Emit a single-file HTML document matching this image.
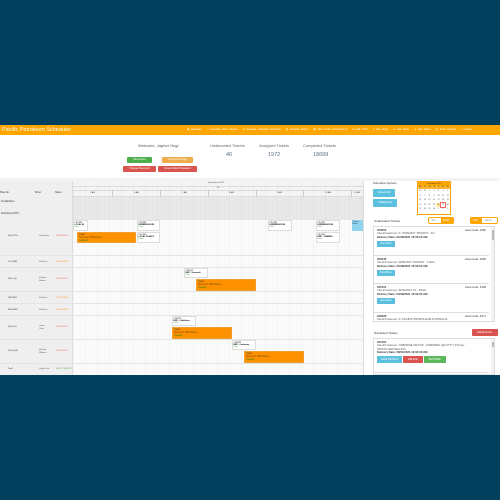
<!DOCTYPE html>
<html><head><meta charset="utf-8"><style>
*{margin:0;padding:0;box-sizing:border-box}
body{width:500px;height:500px;background:#02405e;font-family:"Liberation Sans",sans-serif;position:relative;overflow:hidden}
.a{position:absolute}
.t{position:absolute;white-space:nowrap;line-height:1}
.btn{position:absolute;color:#fff;font-size:2.5px;text-align:center;border-radius:1px}
.card{position:absolute;background:#fff;border:0.5px solid #ddd;font-size:2px;padding:0.5px;line-height:1.2}
.card b{display:block;font-size:2px}
.card i{display:block;background:#fff;color:#4a4;font-style:normal;font-size:2px}
.or{position:absolute;background:#ff9100;border:0.5px solid #f0a030;font-size:2.5px;padding:1px;line-height:1.1;color:#333}
.or span{display:block;color:#6a4a00}
.or em{display:block;color:#2a7a00;font-style:normal}
.tk{position:absolute;left:0;right:5px;border-bottom:0.5px solid #ddd;font-size:2.8px;padding:2px 3px;line-height:1.25;color:#555}
.tk b{color:#333}
.vb{display:inline-block;background:#5bc0de;color:#fff;font-size:2.5px;padding:1.5px 3px;margin-top:1.5px}
</style></head><body>
<div class="a" style="left:0;top:125px;width:500px;height:10px;background:#ffa600"></div>
<div class="t" style="left:2px;top:128px;font-size:5.5px;color:#fff">Pacific Petroleum Scheduler</div>
<div class="t" style="left:187px;top:128.5px;font-size:2.4px;color:#fff;word-spacing:1px">▣ Messages &nbsp; ↗ Generate Driver Routes &nbsp; ⊕ Generate Cancelled Deliveries &nbsp; ▤ Generate Report &nbsp; ▦ View Truck Compartments &nbsp; ⊕ Add Truck &nbsp; ⚲ Add Depot &nbsp; ⊕ Add Driver &nbsp; ▲ Add Admin &nbsp; ▤ Truck Analysis &nbsp; ⇥ Logout</div>
<div class="a" style="left:0;top:135px;width:500px;height:43px;background:#fff"></div>
<div class="a" style="left:0;top:178px;width:500px;height:3px;background:#f3f3f3"></div>
<div class="t" style="left:138px;top:143.5px;font-size:4px;color:#555">Welcome, Japhet Ongl</div>
<div class="t" style="left:210px;top:143.5px;font-size:4px;color:#666">Unallocated Tickets</div>
<div class="t" style="left:259px;top:143.5px;font-size:4px;color:#666">Assigned Tickets</div>
<div class="t" style="left:303px;top:143.5px;font-size:4px;color:#666">Completed Tickets</div>
<div class="t" style="left:226px;top:153px;font-size:5.5px;color:#5a6a80">40</div>
<div class="t" style="left:268px;top:153px;font-size:5.5px;color:#5a6a80">1972</div>
<div class="t" style="left:313px;top:153px;font-size:5.5px;color:#5a6a80">18699</div>
<div class="btn" style="left:127px;top:157px;width:25px;height:6px;background:#4cae4c;line-height:6px">View Driver Schedules</div>
<div class="btn" style="left:162px;top:157px;width:31px;height:6px;background:#f0ad4e;line-height:6px">View Driver Logs</div>
<div class="btn" style="left:123px;top:166px;width:33px;height:6px;background:#d9534f;line-height:6px">Change Password</div>
<div class="btn" style="left:158px;top:166px;width:39px;height:6px;background:#d9534f;line-height:6px">Reset Admin Password</div>

<!-- schedule -->
<div class="a" style="left:0;top:181px;width:363px;height:194px;background:#fafafa"></div>
<div class="a" style="left:0;top:181px;width:73px;height:194px;background:#efefef;border-right:0.5px solid #ddd"></div>
<div class="a" style="left:73px;top:181px;width:290px;height:16px;background:#f4f4f4;border-bottom:0.5px solid #ddd"></div>
<div class="a" style="left:73px;top:186px;width:290px;height:0.5px;background:#ddd"></div>
<div class="a" style="left:73px;top:190px;width:290px;height:0.5px;background:#ddd"></div>
<div class="t" style="left:208px;top:182px;font-size:2.2px;color:#555">September 2021</div>
<div class="t" style="left:217px;top:187px;font-size:2.2px;color:#555">24</div>
<div class="a" style="left:73px;top:197px;width:290px;height:23px;background:#e8e8e8"></div>
<div class="a" style="left:0;top:181px;width:363px;height:194px;background-image:linear-gradient(90deg,rgba(0,0,0,.05) 0.5px,transparent 0.5px);background-size:12px 100%;background-position:73px 0;left:0;clip-path:inset(0 0 0 73px)"></div>
<div class="a" style="left:112px;top:190px;width:0.5px;height:7px;background:#ccc"></div>
<div class="a" style="left:160px;top:190px;width:0.5px;height:7px;background:#ccc"></div>
<div class="a" style="left:208px;top:190px;width:0.5px;height:7px;background:#ccc"></div>
<div class="a" style="left:256px;top:190px;width:0.5px;height:7px;background:#ccc"></div>
<div class="a" style="left:303px;top:190px;width:0.5px;height:7px;background:#ccc"></div>
<div class="a" style="left:351px;top:190px;width:0.5px;height:7px;background:#ccc"></div>
<div class="t" style="left:90px;top:192px;font-size:2.2px;color:#444">5 AM</div>
<div class="t" style="left:134px;top:192px;font-size:2.2px;color:#444">6 AM</div>
<div class="t" style="left:182px;top:192px;font-size:2.2px;color:#444">7 AM</div>
<div class="t" style="left:229px;top:192px;font-size:2.2px;color:#444">8 AM</div>
<div class="t" style="left:277px;top:192px;font-size:2.2px;color:#444">9 AM</div>
<div class="t" style="left:325px;top:192px;font-size:2.2px;color:#444">10 AM</div>
<div class="t" style="left:354px;top:192px;font-size:2.2px;color:#444">11 AM</div>
<div class="t" style="left:0;top:192px;font-size:2.3px;color:#333">Plate No.</div>
<div class="t" style="left:35px;top:192px;font-size:2.3px;color:#333">Driver</div>
<div class="t" style="left:55px;top:192px;font-size:2.3px;color:#333">Status</div>
<div class="t" style="left:1px;top:201px;font-size:2.3px;color:#333">⊟ Calledbore</div>
<div class="t" style="left:1px;top:213px;font-size:2.3px;color:#333">⊟ Rockhea (RTT)</div>
<!-- row lines -->
<div class="a" style="left:0;top:255px;width:363px;height:0.5px;background:#e4e4e4"></div>
<div class="a" style="left:0;top:267px;width:363px;height:0.5px;background:#e4e4e4"></div>
<div class="a" style="left:0;top:291px;width:363px;height:0.5px;background:#e4e4e4"></div>
<div class="a" style="left:0;top:303px;width:363px;height:0.5px;background:#e4e4e4"></div>
<div class="a" style="left:0;top:315px;width:363px;height:0.5px;background:#e4e4e4"></div>
<div class="a" style="left:0;top:339px;width:363px;height:0.5px;background:#e4e4e4"></div>
<div class="a" style="left:0;top:363px;width:363px;height:0.5px;background:#e4e4e4"></div>
<div class="t" style="left:8px;top:235px;font-size:2.2px;color:#333">KQ5-PPG</div><div class="t" style="left:39px;top:235px;font-size:2px;color:#555">Jeremy Dor</div><div class="t" style="left:56px;top:235px;font-size:2px;color:#e66">SHIFT ENDS</div>
<div class="t" style="left:8px;top:261px;font-size:2.2px;color:#333">170-SRR</div><div class="t" style="left:39px;top:261px;font-size:2px;color:#555">No Driver</div><div class="t" style="left:56px;top:261px;font-size:2px;color:#f93">ON STANDBY</div>
<div class="t" style="left:8px;top:278px;font-size:2.2px;color:#333">466-YQ2</div><div class="t" style="left:39px;top:277px;font-size:2px;color:#555;line-height:1.4">Richard<br>Neilson</div><div class="t" style="left:56px;top:278px;font-size:2px;color:#e66">SHIFT ENDS</div>
<div class="t" style="left:8px;top:297px;font-size:2.2px;color:#333">36R-RRT</div><div class="t" style="left:39px;top:297px;font-size:2px;color:#555">No Driver</div><div class="t" style="left:56px;top:297px;font-size:2px;color:#f93">ON STANDBY</div>
<div class="t" style="left:8px;top:309px;font-size:2.2px;color:#333">665-NRW</div><div class="t" style="left:39px;top:309px;font-size:2px;color:#555">No Driver</div><div class="t" style="left:56px;top:309px;font-size:2px;color:#f93">ON STANDBY</div>
<div class="t" style="left:8px;top:326px;font-size:2.2px;color:#333">KQ4-501</div><div class="t" style="left:39px;top:325px;font-size:2px;color:#555;line-height:1.4">Calvin<br>Chan</div><div class="t" style="left:56px;top:326px;font-size:2px;color:#e66">SHIFT ENDS</div>
<div class="t" style="left:8px;top:350px;font-size:2.2px;color:#333">3Z6-QUM</div><div class="t" style="left:39px;top:349px;font-size:2px;color:#555;line-height:1.4">Michael<br>Williams</div><div class="t" style="left:56px;top:350px;font-size:2px;color:#e66">SHIFT ENDS</div>
<div class="t" style="left:8px;top:368px;font-size:2.2px;color:#333">Test1</div><div class="t" style="left:39px;top:368px;font-size:2px;color:#555">Japhet Test</div><div class="t" style="left:56px;top:368px;font-size:2px;color:#6a6">SHIFT STARTED</div>
<!-- cards -->
<div class="card" style="left:73px;top:220px;width:15px;height:11px">#JL5299<b>LOCAL IN</b><i>Done</i></div>
<div class="card" style="left:137px;top:220px;width:23px;height:11px">#JL5299<b>NUFBREGON IN</b><i>Done</i></div>
<div class="card" style="left:137px;top:232px;width:23px;height:11px">#JL5299<b>LOCAL PLANT II</b><i>Done</i></div>
<div class="card" style="left:268px;top:220px;width:24px;height:11px">#JL5299<b>NUFBREGON IN</b><i>Done</i></div>
<div class="card" style="left:316px;top:220px;width:24px;height:11px">#JL5271<b>NUFBREGON IN</b><i>Done</i></div>
<div class="card" style="left:316px;top:232px;width:24px;height:11px">#JL5251<b>BNP - CENNED I</b><i>Done</i></div>
<div class="a" style="left:352px;top:220px;width:11px;height:11px;background:#8fd3ef;font-size:2px;padding:0.5px;color:#135">Transit<br>Ewan</div>
<div class="card" style="left:184px;top:268px;width:24px;height:10px">#JS7372<b>BNF - Teewoodi</b><i>Done</i></div>
<div class="card" style="left:172px;top:316px;width:24px;height:10px">#JS7355<b>BNF - Calledbore</b><i>Done</i></div>
<div class="card" style="left:232px;top:340px;width:24px;height:10px">#JS5291<b>BNF - Coolooray</b><i>Done</i></div>
<div class="or" style="left:77px;top:232px;width:59px;height:11px">Load<span>Terminal: Whitstance</span><em>Loaded</em></div>
<div class="or" style="left:196px;top:279px;width:60px;height:12px">Load<span>Terminal: Whitstance</span><em>Loaded</em></div>
<div class="or" style="left:172px;top:327px;width:60px;height:12px">Load<span>Terminal: Whitstance</span><em>Loaded</em></div>
<div class="or" style="left:244px;top:351px;width:60px;height:12px">Load<span>Terminal: Whitstance</span><em>Loaded</em></div>

<!-- right panel -->
<div class="a" style="left:363px;top:181px;width:137px;height:194px;background:#fff;border-left:0.5px solid #ddd"></div>
<div class="t" style="left:373px;top:181.5px;font-size:3px;color:#333">Schedule Options</div>
<div class="btn" style="left:373px;top:189px;width:22px;height:8px;background:#5bc0de;line-height:8px;font-size:2.6px">Expand All</div>
<div class="btn" style="left:373px;top:199px;width:24px;height:8px;background:#5bc0de;line-height:8px;font-size:2.6px">Collapse All</div>
<div class="a" style="left:417px;top:181px;width:34px;height:34px;background:#fff;border:0.5px solid #ffa600;font-size:1.8px;color:#333">
<div style="background:#ffa600;height:4px;line-height:4px;text-align:center;color:#333">‹ September 2021 ›</div>
<div style="background:#ffb733;height:3px;line-height:3px;display:flex;justify-content:space-around"><span>Mo</span><span>Tu</span><span>We</span><span>Th</span><span>Fr</span><span>Sa</span><span>Su</span></div>
<div style="line-height:4.6px;display:grid;grid-template-columns:repeat(7,1fr);text-align:center"><span>30</span><span>31</span><span>1</span><span>2</span><span>3</span><span>4</span><span>5</span><span>6</span><span>7</span><span>8</span><span>9</span><span>10</span><span>11</span><span>12</span><span>13</span><span>14</span><span>15</span><span>16</span><span>17</span><span>18</span><span>19</span><span>20</span><span>21</span><span>22</span><span>23</span><span style="background:#ffe9a0">24</span><span style="outline:0.5px solid #e66">25</span><span>26</span><span>27</span><span>28</span><span>29</span><span>30</span><span>1</span><span>2</span><span>3</span></div></div>
<div class="t" style="left:374px;top:219.5px;font-size:3px;color:#333">Unallocated Tickets</div>
<div class="a" style="left:428px;top:217px;width:26px;height:7px;border:0.5px solid #ffa600;border-radius:2px;background:#fff"></div>
<div class="a" style="left:441px;top:217px;width:13px;height:7px;background:#ffa600;border-radius:0 2px 2px 0"></div>
<div class="t" style="left:432px;top:219.5px;font-size:2.3px;color:#999">ZIP</div><div class="t" style="left:443px;top:219.5px;font-size:2.3px;color:#fff">BASE</div>
<div class="a" style="left:470px;top:217px;width:28px;height:7px;border:0.5px solid #ffa600;border-radius:2px;background:#fff"></div>
<div class="a" style="left:470px;top:217px;width:12px;height:7px;background:#ffa600;border-radius:2px 0 0 2px"></div>
<div class="t" style="left:473px;top:219.5px;font-size:2.3px;color:#fff">ASC</div><div class="t" style="left:485px;top:219.5px;font-size:2.3px;color:#999">DESC</div>
<div class="a" style="left:373px;top:226px;width:122px;height:96px;border:0.5px solid #ddd;overflow:hidden">
<div class="tk" style="top:0;height:29px"><b>#20050</b><span style="float:right;color:#333">Area Code: 4050</span><br>Client/Customer: P- WIDE BAY TRANSIT - Ful<br><b>Delivery Date: 21/09/2021 12:00:00 AM</b><br><span class="vb">View More</span></div>
<div class="tk" style="top:29px;height:28px"><b>#20040</b><span style="float:right;color:#333">Area Code: 4050</span><br>Client/Customer: WIDE BAY TRANSIT - Fulton<br><b>Delivery Date: 21/09/2021 12:00:00 AM</b><br><span class="vb">View More</span></div>
<div class="tk" style="top:57px;height:29px"><b>#20721</b><span style="float:right;color:#333">Area Code: 4306</span><br>Client/Customer: BUSHWAY PL - BULK<br><b>Delivery Date: 24/09/2021 12:00:00 AM</b><br><span class="vb">View More</span></div>
<div class="tk" style="top:86px;height:29px;border:0"><b>#22920</b><span style="float:right;color:#333">Area Code: 4071</span><br>Client/Customer: P- PACIFIC PETROLEUM AUSTRALIA</div>
<div class="a" style="right:0;top:0;width:3px;height:96px;background:#f3f3f3"></div>
<div class="a" style="right:0.5px;top:3px;width:2px;height:10px;background:#bbb"></div>
</div>
<div class="t" style="left:374px;top:331.5px;font-size:3px;color:#333">Discarded Tickets</div>
<div class="btn" style="left:472px;top:329px;width:26px;height:7px;background:#d9534f;line-height:7px;font-size:2.6px">DELETE ALL</div>
<div class="a" style="left:373px;top:338px;width:122px;height:37px;border:0.5px solid #ddd;overflow:hidden">
<div class="tk" style="top:0;height:34px"><b>#21004</b><br>Client/Customer: OSBORNE GROUP - OSBORNE QLD PTY LTD t/as -<br>ONSITE REFUELLING<br><b>Delivery Date: 06/04/2021 12:00:00 AM</b><br><span class="vb" style="padding:1.5px 4px">VIEW DETAILS</span> <span class="vb" style="background:#d9534f;padding:1.5px 5px">DELETE</span> <span class="vb" style="background:#5cb85c;padding:1.5px 5px">RESTORE</span></div>
<div class="a" style="right:0;top:0;width:3px;height:37px;background:#f3f3f3"></div>
<div class="a" style="right:0.5px;top:3px;width:2px;height:5px;background:#bbb"></div>
</div>
</body></html>
